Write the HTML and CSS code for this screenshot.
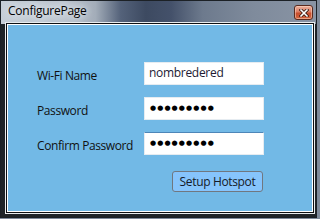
FILE: index.html
```html
<!DOCTYPE html>
<html lang="en">
<head>
    <meta charset="UTF-8">
    <meta name="viewport" content="width=device-width, initial-scale=1.0">
    <title>ConfigurePage</title>
<link rel="stylesheet" href="styles.css">
</head>
<body>
<div class="window">
    <div class="titlebar">
        <span class="title">ConfigurePage</span>
        <button class="close">
            <svg width="10" height="8" viewBox="0 0 10 8">
                <path d="M2 1 L8 7 M8 1 L2 7" stroke="#3a1a12" stroke-width="3.2" stroke-linecap="square"/>
                <path d="M2 1 L8 7 M8 1 L2 7" stroke="#fff" stroke-width="1.6" stroke-linecap="square"/>
            </svg>
        </button>
    </div>
    <div class="client">
        <div class="form">
            <div class="label">Wi-Fi Name</div>
            <div class="field">nombredered</div>
            <div class="label">Password</div>
            <div class="field dots">●●●●●●●●●</div>
            <div class="label">Confirm Password</div>
            <div class="field dots active">●●●●●●●●●</div>
            <button class="btn">Setup Hotspot</button>
        </div>
    </div>
</div>
</body>
</html>
```

FILE: styles.css
```css
body {margin: 0;width: 320px;height: 219px;overflow: hidden;background: #7f8b9b;font-family: "Open Sans", "Noto Sans", sans-serif;}
.window {width: 315px;height: 216px;border: 1px solid #1c2126;background: #1f2428;display: flex;flex-direction: column;}
.titlebar {height: 23px;flex: none;display: flex;align-items: flex-start;justify-content: space-between;padding: 0 3px 0 7px;
    background: linear-gradient(90deg, #c6ced7 0%, #bcc5cf 20%, #a3adb9 30%, #54627a 38%, #3d4a61 46%, #44516a 54%, #6d7a8d 64%, #7f8b9c 80%, #8994a4 100%);}
.title {font-size: 12px;line-height: 18px;margin-top: 1px;color: #000;letter-spacing: -0.25px;text-shadow: 0 0 6px #e8edf2, 0 0 10px #e8edf2;}
.close {width: 19px;height: 15px;margin-top: 4px;padding: 0;border: 1px solid #5a2a1e;border-radius: 3px;display: flex;align-items: center;justify-content: center;
    background: linear-gradient(#ebb09d 0%, #dc7d63 45%, #c84d2d 55%, #d0643f 100%);box-shadow: inset 0 0 0 1px rgba(255,220,200,0.5);}
.client {margin: 0 0 0 6px;width: 304px;height: 186px;border: 1px solid #fff;box-shadow: 0 0 0 1px #0e1114, 0 0 0 2px #e9ecee;background: #72b9e6;}
.form {display: grid;grid-template-columns: 107px 120px;grid-auto-rows: 23px;row-gap: 12px;padding: 37px 0 0 29px;align-items: center;}
.label {font-size: 12px;color: #111;letter-spacing: -0.4px;padding-top: 3px;}
.field {height: 21px;border: 1px solid #e6ecf1;background: #fff;font-size: 12px;line-height: 20px;padding-left: 4px;color: #221a33;letter-spacing: -0.3px;}
.dots {font-family: "DejaVu Sans", sans-serif;font-size: 7px;letter-spacing: 1.1px;line-height: 21px;padding-left: 5px;color: #000;}
.active {border-top-color: #4d86b8;}
.btn {grid-column: 2;justify-self: end;margin: 5px 1px 0 0;width: 91px;height: 21px;padding: 0;border: 1px solid #707780;border-radius: 3px;background: #86c4fc;
    font-family: "Open Sans", "Noto Sans", sans-serif;font-size: 12px;color: #151a28;letter-spacing: -0.35px;}
```
